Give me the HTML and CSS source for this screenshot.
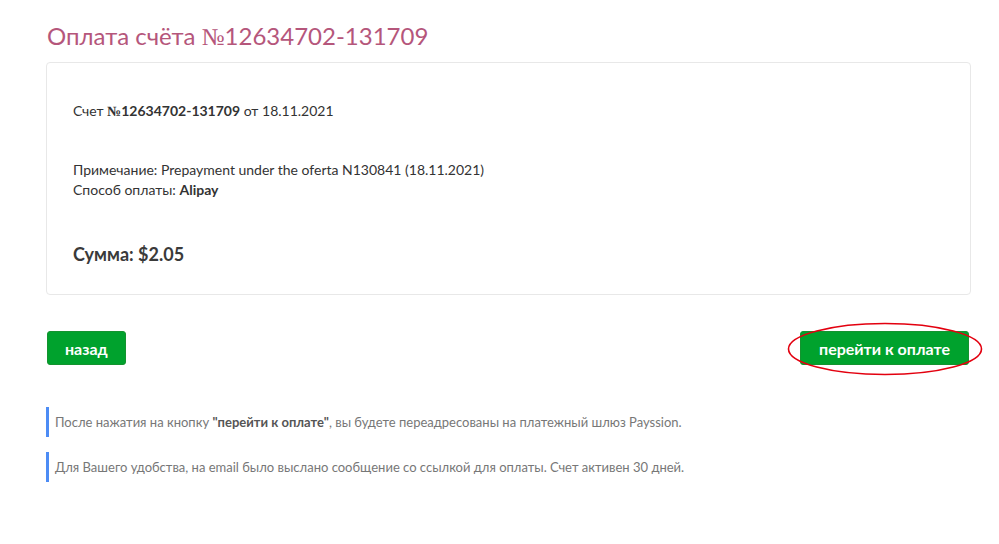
FILE: index.html
```html
<!DOCTYPE html>
<html>
<head>
    <meta charset="utf-8">
    <title>Оплата счёта</title>
    <link rel="stylesheet" href="styles.css">
</head>
<body>
    <div class="container">
        <h1 class="title">Оплата счёта <span class="num">№</span>12634702-131709</h1>

        <div class="card">
            <p class="invoice">Счет <b><span class="num">№</span>12634702-131709</b> от 18.11.2021</p>
            <p class="note">Примечание: Prepayment under the oferta N130841 (18.11.2021)<br>
                Способ оплаты: <b>Alipay</b></p>
            <p class="sum">Сумма: $2.05</p>
        </div>

        <div class="actions">
            <button class="btn">назад</button>
            <div class="pay-wrap">
                <button class="btn btn-pay">перейти к оплате</button>
                <svg class="circle" width="196" height="54" viewBox="0 0 196 54">
                    <ellipse cx="98" cy="27" rx="96.5" ry="25.5" fill="none" stroke="#e3000f" stroke-width="1.6"/>
                </svg>
            </div>
        </div>

        <div class="info">После нажатия на кнопку <b>"перейти к оплате"</b>, вы будете переадресованы на платежный шлюз Payssion.</div>
        <div class="info">Для Вашего удобства, на email было выслано сообщение со ссылкой для оплаты. Счет активен 30 дней.</div>
    </div>
</body>
</html>
```

FILE: styles.css
```css
body {
    margin: 0;
    font-family: Lato, "Open Sans", sans-serif;
    color: #333;
    background: #fff;
}

.container {
    width: 925px;
    padding: 20px 0 0 46px;
}

.title {
    margin: 0 0 8px 1px;
    font-size: 24px;
    font-weight: 400;
    line-height: 32px;
    height: 34px;
    color: #b5567b;
}

.num {
    font-family: "Liberation Serif", serif;
}

.card {
    border: 1px solid #e8e8e8;
    border-radius: 4px;
    padding: 38px 26px 28px;
    font-size: 14px;
    line-height: 20px;
}

.card p {
    margin: 0;
}

.card b {
    font-weight: 700;
}

.invoice {
    margin-bottom: 38px !important;
}

.sum {
    margin-top: 42px !important;
    font-size: 18px;
    font-weight: 700;
    line-height: 24px;
    color: #3a3a3a;
}

.actions {
    display: flex;
    justify-content: space-between;
    align-items: center;
    margin: 36px 2px 0 1px;
}

.btn {
    height: 34px;
    padding: 0 17px;
    border: 1px solid #14932f;
    border-radius: 3px;
    background: #00a22d;
    color: #fff;
    font-family: Lato, sans-serif;
    font-size: 16px;
    font-weight: 700;
}

.btn-pay {
    padding: 0 18px;
}

.pay-wrap {
    position: relative;
}

.circle {
    position: absolute;
    left: -13px;
    top: -9px;
}

.info {
    margin-top: 42px;
    border-left: 3px solid #4d8cf5;
    padding: 6px 0 6px 6px;
    font-size: 13px;
    line-height: 18px;
    color: #777;
}

.info + .info {
    margin-top: 15px;
}

.info b {
    color: #555;
}
```
